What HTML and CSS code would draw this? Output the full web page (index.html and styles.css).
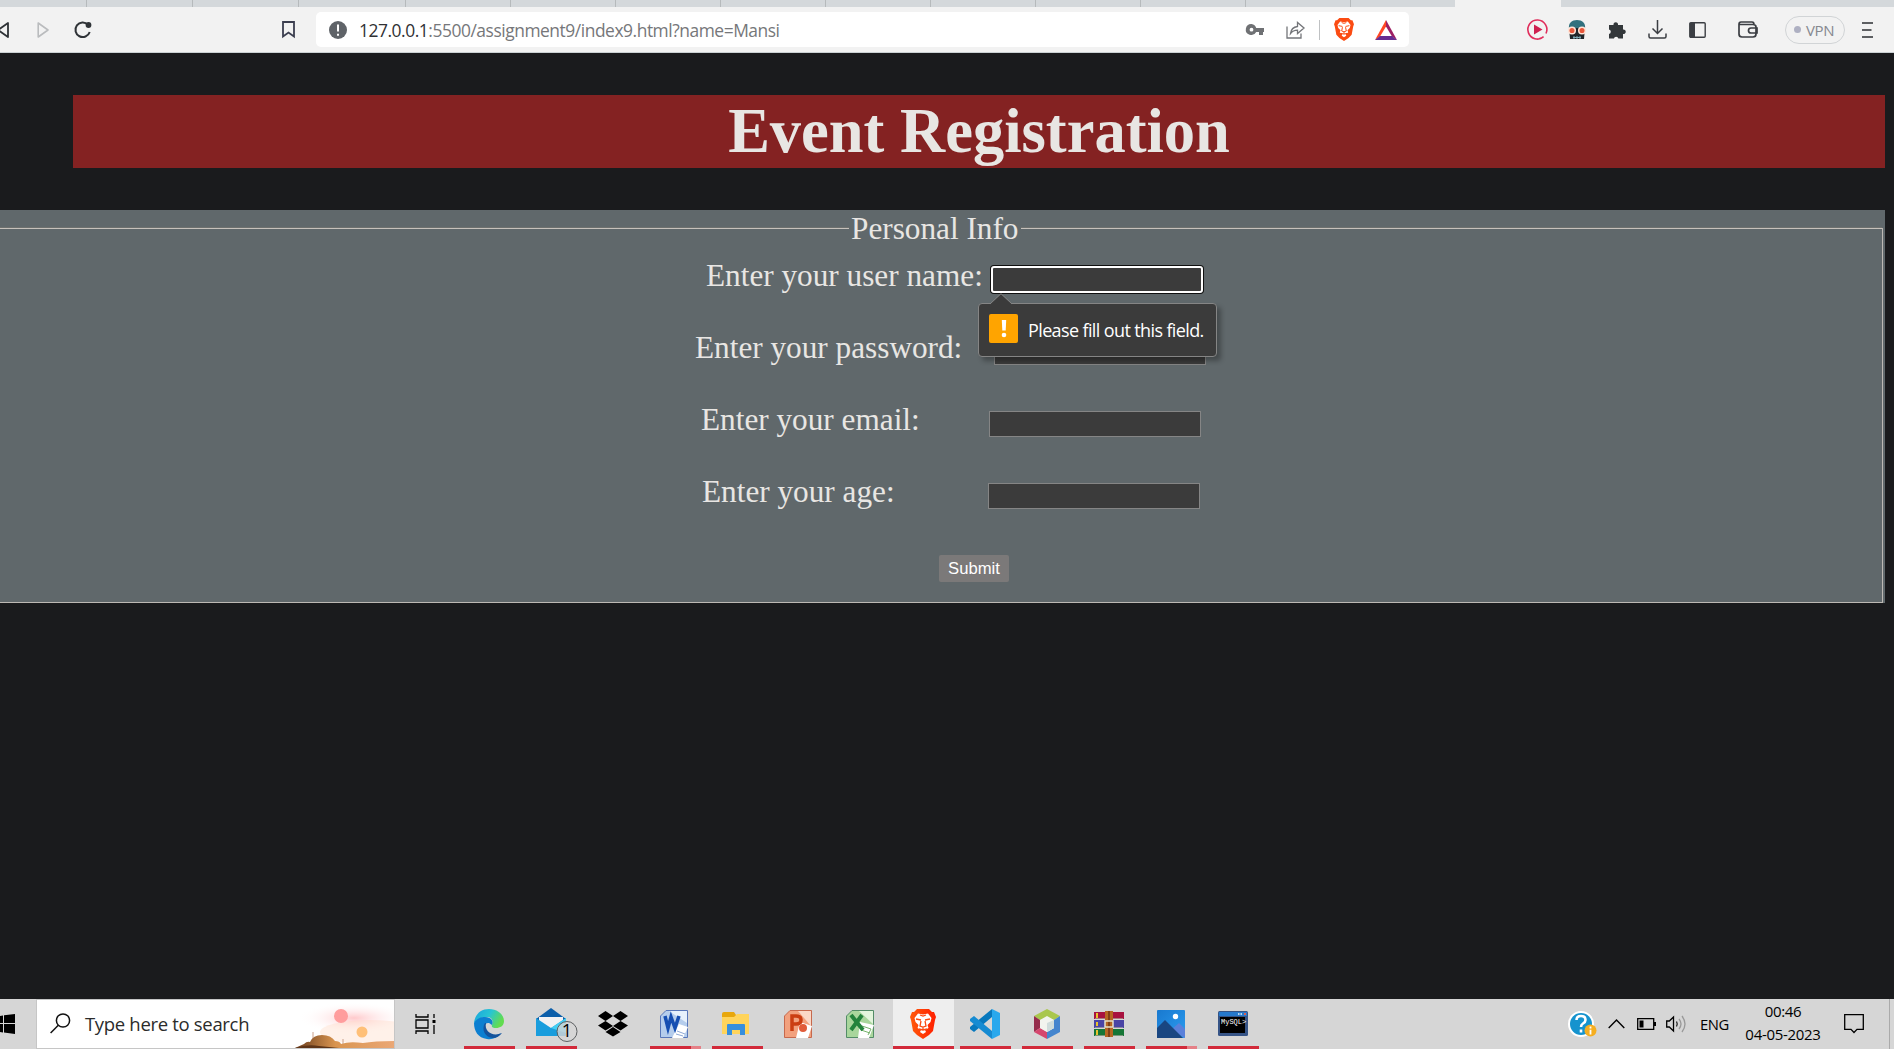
FILE: index.html
```html
<!DOCTYPE html>
<html lang="en">
<head>
<meta charset="utf-8">
<title>Event Registration</title>
<link rel="stylesheet" href="styles.css">
</head>
<body>
<svg class="defs" width="0" height="0">
  <defs>
    <linearGradient id="brave" x1="0" x2="1"><stop offset="0" stop-color="#ff5a0a"/><stop offset="1" stop-color="#ff1e00"/></linearGradient>
    <linearGradient id="edge" x1="0" y1="0" x2="1" y2="0.4"><stop offset="0" stop-color="#1aa3e0"/><stop offset="0.55" stop-color="#28c5d2"/><stop offset="1" stop-color="#62dc50"/></linearGradient>
    <linearGradient id="desert" x1="0" x2="1"><stop offset="0" stop-color="#6b3d1c"/><stop offset="0.4" stop-color="#d99550"/><stop offset="1" stop-color="#eba877"/></linearGradient>
    <radialGradient id="glow"><stop offset="0" stop-color="#ffc9cb"/><stop offset="1" stop-color="#fff" stop-opacity="0"/></radialGradient>
    <linearGradient id="photo" x2="1" y2="1"><stop offset="0" stop-color="#1979cf"/><stop offset="1" stop-color="#2b9cf0"/></linearGradient>
    <symbol id="lion" viewBox="0 0 26 30">
      <path d="M7 0h12l3 3 2 0 2 5-1 3-2 11-4 4-6 4-6-4-4-4L1 11 0 8l2-5h2z"/>
      <path fill="#fff" d="M8 4.500l5 1 5-1 3.500 4.500-1 4-3 3 1 3-3.500 2 1 2-3 2-3-2 1-2-3.500-2 1-3-3-3-1-4z"/>
      <path class="lion-face" d="M6 10l5 1M20 10l-5 1M11 12l-1 5 3 1 3-1-1-5M9 20l4 1 4-1M13 18v3M10 6l3 1 3-1"/>
    </symbol>
  </defs>
</svg>

<header class="browser">
  <div class="tabs">
    <span class="tab tab-first"></span><span class="tab tab-wide"></span><span class="tab tab-wide"></span><span class="tab tab-wide"></span><span class="tab"></span><span class="tab"></span><span class="tab"></span><span class="tab"></span><span class="tab"></span><span class="tab"></span><span class="tab"></span><span class="tab"></span><span class="tab"></span><span class="tab tab-last"></span><span class="tab tab-active"></span>
  </div>
  <div class="toolbar">
    <svg class="back" width="10" height="18" viewBox="0 0 10 18"><path d="M8 2v14L-2 9z" fill="none" stroke="#2f3337" stroke-width="1.8" stroke-linejoin="round"/></svg>
    <svg class="forward" width="13" height="18" viewBox="0 0 13 18"><path d="M1.2 2v14L11 9z" fill="none" stroke="#babcbe" stroke-width="1.6" stroke-linejoin="round"/></svg>
    <svg class="reload" width="18" height="18" viewBox="0 0 18 18"><path d="M15.7 11A7.3 7.3 0 1 1 14 3.7" fill="none" stroke="#2f3337" stroke-width="2"/><circle cx="14.5" cy="4" r="2.9" fill="#2f3337"/></svg>
    <svg class="bookmark" width="13" height="17" viewBox="0 0 13 17"><path d="M1 1h11v14.6l-5.5-4L1 15.600z" fill="none" stroke="#3b3e4f" stroke-width="1.8"/></svg>
    <div class="address">
      <svg class="info" width="18" height="18" viewBox="0 0 18 18"><circle cx="9" cy="9" r="9" fill="#5f6368"/><path d="M9 3.500v7M9 12.800v2" stroke="#fff" stroke-width="2"/></svg>
      <span class="url"><b>127.0.0.1</b>:5500/assignment9/index9.html?name=Mansi</span>
      <svg class="key" width="18" height="12" viewBox="0 0 18 12"><path d="M5.500 0a5.500 5.500 0 1 0 4.700 8H13v3h4V8h1V4h-7.800A5.500 5.500 0 0 0 5.500 0zm0 3.800a1.900 1.900 0 1 1 0 3.800 1.900 1.900 0 0 1 0-3.800z" fill="#6f7174" fill-rule="evenodd"/></svg>
      <svg class="share" width="19" height="18" viewBox="0 0 19 18"><path d="M1 5.500v11.500h14v-4.500M4.500 12.500c.5-4 3-6.500 7-7V1.500L18 7l-6.500 5.500V9.200c-3.200 0-5.200 1-7 3.300z" fill="none" stroke="#737579" stroke-width="1.300"/></svg>
      <i class="divider"></i>
      <svg class="shield" width="20" height="23" fill="#fb4b12"><use href="#lion"/></svg>
      <svg class="bat" width="22" height="20" viewBox="0 0 22 20"><path d="M11 0L0 20l5-3.500 6-10z" fill="#ff4724"/><path d="M11 0l11 20-5-3.500-6-10z" fill="#9e1f63"/><path d="M0 20h22l-5-4H5z" fill="#662d91"/></svg>
    </div>
    <svg class="play" width="21" height="21" viewBox="0 0 21 21"><path d="M19 14.500a9.500 9.500 0 1 0-2.400 3.200M15 18.700A9.500 9.500 0 0 1 12 19.800" fill="none" stroke="#e02e5c" stroke-width="1.600"/><path d="M7 5.500v10l8.500-5z" fill="#cf2050"/></svg>
    <svg class="ninja" width="20" height="19" viewBox="0 0 20 19"><path d="M2 9C1 3 5 0 10 0s9 3 8 9z" fill="#31717e"/><path d="M2 8h16l-1 11H3z" fill="#20262b"/><circle cx="5" cy="10.500" r="3.300" fill="#e8583c" stroke="#ffe5d8" stroke-width="1.500"/><circle cx="15" cy="10.500" r="3.300" fill="#e8583c" stroke="#ffe5d8" stroke-width="1.500"/><path d="M6 17.500h8M7 16v3M10 16v3M13 16v3" stroke="#7fa8b4"/></svg>
    <svg class="puzzle" width="18" height="18" viewBox="0 0 18 18"><path d="M1 4h4.500a2.300 2.300 0 1 1 4.500 0h5v4.500a2.300 2.300 0 1 1 0 4.500v4.500h-4.600a2.300 2.300 0 0 0-4.500 0H1V13a2.300 2.300 0 0 0 0-4.500z" fill="#33373a"/></svg>
    <svg class="download" width="19" height="19" viewBox="0 0 19 19"><path d="M9.500 0v13M4.500 8.500l5 5 5-5M1 13.500v3q0 1.500 1.500 1.500h14q1.500 0 1.500-1.500v-3" fill="none" stroke="#3b3e43" stroke-width="1.500"/></svg>
    <svg class="panel" width="17" height="16" viewBox="0 0 17 16"><rect x=".8" y=".8" width="15.400" height="14.400" rx="1" fill="none" stroke="#3b3e43" stroke-width="1.400"/><path d="M1 1h5v14H1z" fill="#3b3e43"/></svg>
    <svg class="wallet" width="20" height="17" viewBox="0 0 20 17"><path d="M1 3.500V13q0 3 3 3h11q3 0 3-3V6q0-2.500-3-2.500H1q0-2.500 2-2.500h11q2 0 2 2.500M19 7h-6q-2.500 0-2.500 2.500t2.500 2.500h6z" fill="none" stroke="#3b3e43" stroke-width="1.700"/></svg>
    <div class="vpn"><i></i>VPN</div>
    <svg class="menu" width="11" height="16" viewBox="0 0 11 16"><path d="M0 1h11M0 8h9.500M0 15h11" stroke="#2d2f33" stroke-width="1.700"/></svg>
  </div>
</header>

<main class="page">
  <h1 class="title">Event Registration</h1>
  <form class="form">
    <div class="legend-row"><span class="legend">Personal Info</span></div>
    <div class="fields">
      <div class="row row-name"><label>Enter your user name:</label>
        <div class="control"><input class="focused" type="text">
          <div class="bubble"><svg class="arrow" width="22" height="11" viewBox="0 0 22 11"><path d="M0 11L11 .7 22 11" fill="#3b3b3b" stroke="#858585" stroke-width="1"/></svg><span class="warn"><svg width="6" height="18" viewBox="0 0 6 18"><path d="M.8 0h4.400l-.5 10.500H1.300z" fill="#fff"/><circle cx="3" cy="15" r="2.300" fill="#fff"/></svg></span><span class="bubble-text">Please fill out this field.</span></div>
        </div>
      </div>
      <div class="row row-password"><label>Enter your password:</label><input type="password"></div>
      <div class="row row-email"><label>Enter your email:</label><input type="text"></div>
      <div class="row row-age"><label>Enter your age:</label><input type="text"></div>
      <button class="submit" type="button">Submit</button>
    </div>
  </form>
</main>

<footer class="taskbar">
  <svg class="start" width="15" height="20" viewBox="0 0 15 20"><path d="M0 2l3-.5V9H0zM4 1.300L15 0v9H4zM0 10h3v8.500L0 18zM4 10h11v10L4 18.600z" fill="#000"/></svg>
  <div class="search">
    <svg class="lens" width="21" height="21" viewBox="0 0 21 21"><circle cx="13" cy="7.500" r="6.600" fill="none" stroke="#111" stroke-width="1.500"/><path d="M8.300 12.300L.6 20" stroke="#111" stroke-width="1.500"/></svg>
    <span class="search-text">Type here to search</span>
    <svg class="art" width="100" height="48" viewBox="0 0 100 48"><ellipse cx="60" cy="18" rx="56" ry="16" fill="url(#glow)"/><ellipse cx="76" cy="32" rx="50" ry="12" fill="#ffd8c0" opacity=".35"/><circle cx="47" cy="16" r="7" fill="#ff9d9d"/><circle cx="68" cy="32" r="5.500" fill="#ffc078"/><path d="M19 44V32M49 46v-7" stroke="#caa08a"/><path d="M1 48l9-4q3-3 6-2 3-7 12-7t13 6q5 0 6 3 8-3 22-1 12-2 33-2v9z" fill="url(#desert)"/><path d="M1 48q12-4 24-2l20 2z" fill="#5e3518"/></svg>
  </div>
  <svg class="taskview" width="21" height="20" viewBox="0 0 21 20"><path d="M1 0v3h12V0M1 6h12v8H1zM1 20v-3h12v3M19 0v4M19 11v9" fill="none" stroke="#000" stroke-width="1.300"/><path d="M17.500 6h3v3h-3z"/></svg>
  <nav class="apps">
    <div class="app running"><svg width="30" height="30" viewBox="0 0 30 30"><path d="M0 14C1 5 7 0 15 0c9 0 15 6 15 12 0 5-4 7-8 7-3 0-5-1-4-3 2-5-1-8-5-8-6 0-10 3-13 6z" fill="url(#edge)"/><path d="M0 14c3-5 7-6 11-6 6 0 9 4 7 8-5-5-9 0-7 5 2 6 9 8 16 3-4 5-9 7-14 6C4 29 0 22 0 14z" fill="#0c7fd1"/><path d="M11 14c-4 6 0 15 8 15 3 0 7-2 9-5-9 4-18-1-16-10z" fill="#14539c"/></svg></div>
    <div class="app running"><svg width="42" height="34" viewBox="0 0 42 34"><path d="M0 11L15 0l15 11v7H0z" fill="#0b5eaa"/><path d="M3 9h24v12H3z" fill="#f1f1f3"/><path d="M0 10l15 10 15-10v18H0z" fill="#199ddd"/><path d="M15 20l15-10v15z" fill="#43cdf2"/><circle cx="31" cy="23.500" r="10" fill="#d6d6d6" fill-opacity=".8" stroke="#5e6163"/><text x="31" y="29" text-anchor="middle" class="badge">1</text></svg></div>
    <div class="app"><svg width="30" height="26" viewBox="0 0 30 26"><path d="M7.500 0L15 5 7.500 10 0 5zM22.500 0L30 5l-7.500 5L15 5zM7.500 10l7.500 5-7.500 4.500L0 14.500zM22.500 10l7.500 4.500-7.500 5-7.500-4.500zM7.500 21l7.500-5 7.500 5L15 25.500z"/></svg></div>
    <div class="app running multi"><svg width="28" height="28" viewBox="0 0 28 28"><path d="M6 .5h21.500v27H.5V6z" fill="#b5cdec" stroke="#5877b9"/><path d="M9 1h18v12z" fill="#e6f1fc"/><path d="M19 14l9 3-5 11H12z" fill="#fff"/><path d="M17 21l8 3M16 24l7 2" stroke="#8da8d4"/><path d="M5 6l3 12L11 7l4 11 4-12" fill="none" stroke="#154eb2" stroke-width="3.500"/></svg></div>
    <div class="app running"><svg width="28" height="24" viewBox="0 0 28 24"><path d="M0 2q0-2 2-2h10l2 3h12q1 0 1 2v17H0z" fill="#e8a70c"/><path d="M0 5h12l3-3h12v20H0z" fill="#ffd45b"/><path d="M5 23V13q0-1 1-1h16q1 0 1 1v10h-5v-5h-8v5z" fill="#378fdd"/></svg></div>
    <div class="app"><svg width="28" height="28" viewBox="0 0 28 28"><path d="M6 .5h21.500v27H.5V6z" fill="#f2a17e" stroke="#c6694d"/><path d="M14 1h13v15z" fill="#fbd8c6"/><path d="M16 12l12 4-4 12H12z" fill="#fff"/><circle cx="19" cy="18" r="4" fill="#e15c3a"/><path d="M8 21V6h4q5 0 5 4t-5 4H8" fill="none" stroke="#cb3e12" stroke-width="3.500"/></svg></div>
    <div class="app"><svg width="28" height="28" viewBox="0 0 28 28"><path d="M6 .5h21.500v27H.5V6z" fill="#a9d69c" stroke="#538c67"/><path d="M13 1h14v13z" fill="#e4f5dc"/><path d="M14 12l14 3-5 13H12z" fill="#fff"/><path d="M16 16l9 3-3 6M15 20l9 3" fill="none" stroke="#76b36a"/><path d="M5 5l12 15M16 5L5 20" stroke="#23833c" stroke-width="4"/></svg></div>
    <div class="app running current"><svg width="26" height="30" fill="url(#brave)"><use href="#lion"/></svg></div>
    <div class="app running"><svg width="30" height="30" viewBox="0 0 30 30"><path d="M22 0l8 4v22l-8 4z" fill="#29a8ed"/><path d="M22 0v8L4 23l-4-3v-2z" fill="#0878bd"/><path d="M22 30v-8L4 7 0 10v2z" fill="#168bd2"/></svg></div>
    <div class="app running"><svg width="28" height="30" viewBox="0 0 28 30"><path d="M14 0l13 7-6 4-7-3-7 3-6-4z" fill="#a9c74d"/><path d="M1 7l6 4v8l-6 4z" fill="#952c4c"/><path d="M1 23l6-4 7 4v7z" fill="#d6466e"/><path d="M27 7v16l-13 7v-7l7-4v-8z" fill="#4485ce"/><path d="M14 7l7 4v8l-7 4-7-4v-8z" fill="#f2f4ee"/><path d="M14 14l7-3v8l-7 4z" fill="#cfdcdb"/></svg></div>
    <div class="app running"><svg width="30" height="26" viewBox="0 0 30 26"><path d="M0 1h30v7H0z" fill="#a8123f"/><path d="M0 9h30v8H0z" fill="#4a45a5"/><path d="M0 18h30v7H0z" fill="#167636"/><path d="M1 7.500h28M1 16.500h28M1 24.500h28" stroke="#a9a69a" stroke-width=".7"/><path d="M3 2v5M3 11v4M3 19v5" stroke="#eac22d" stroke-width="2"/><path d="M11 0h8v26h-8z" fill="#b66622"/><path d="M15 0v26" stroke="#824016" stroke-width="2"/><rect x="11" y="10" width="8" height="6" fill="none" stroke="#e4e1c8" stroke-width="1.500"/></svg></div>
    <div class="app running multi"><svg width="28" height="28" viewBox="0 0 28 28"><rect width="28" height="28" rx="1" fill="url(#photo)"/><path d="M28 28V19l-6-6-8 7z" fill="#5a80da"/><path d="M0 18l8-8 18 18H0z" fill="#194681"/><circle cx="18.500" cy="6.500" r="2.700" fill="#fff"/></svg></div>
    <div class="app running"><svg width="30" height="25" viewBox="0 0 30 25"><rect width="30" height="25" rx="1.500" fill="#365486"/><path d="M1 1h28v4H1z" fill="#2679cc"/><path d="M2 6h25v16H2z"/><path d="M20 3h5" stroke="#b9d8ee" stroke-dasharray="1.500 1" stroke-width="2"/><path d="M26 2h2v2h-2z" fill="#dc5d51"/><text x="3" y="13" class="mysql">MySQL&gt;</text></svg></div>
  </nav>
  <div class="tray">
    <svg class="help" width="29" height="27" viewBox="0 0 29 27"><circle cx="13" cy="13" r="12" fill="#1593ce" stroke="#fff" stroke-width="2"/><path d="M8.500 9q0-4 4.500-4t4.500 4q0 2-2.500 3.500-2 1.200-2 3.500M13 18.500v3" fill="none" stroke="#fff" stroke-width="2.600"/><circle cx="22.500" cy="19.500" r="6" fill="#f5ae20"/><path d="M22.500 15.500v2M22.500 18.800v4.700" stroke="#fff" stroke-width="1.800"/></svg>
    <svg class="chevron" width="17" height="10" viewBox="0 0 17 10"><path d="M.7 9l7.800-8 7.800 8" fill="none" stroke="#000" stroke-width="1.400"/></svg>
    <svg class="battery" width="19" height="12" viewBox="0 0 19 12"><path d="M.7.700h16v10.600H.7z" fill="none" stroke="#000" stroke-width="1.300"/><path d="M2.500 2.500h4v7h-4zM17 4h2v4h-2z"/></svg>
    <svg class="volume" width="21" height="18" viewBox="0 0 21 18"><path d="M.7 6h2.600L7.500 2v14l-4.200-4H.7z" fill="none" stroke="#000" stroke-width="1.300"/><path d="M10.500 6.500q1.500 2.500 0 5" fill="none" stroke="#222" stroke-width="1.300"/><path d="M13 4q4 5 0 10M16 1q6 8 0 16" fill="none" stroke="#999" stroke-width="1.300"/></svg>
    <span class="lang">ENG</span>
    <div class="clock"><span class="time">00:46</span><span class="date">04-05-2023</span></div>
    <svg class="notify" width="20" height="20" viewBox="0 0 20 20"><path d="M.7.700h18.600v14.600H13L10 18.500 7 15.300H.7z" fill="none" stroke="#000" stroke-width="1.300"/></svg>
    <i class="peek"></i>
  </div>
</footer>
</body>
</html>
```

FILE: styles.css
```css
* { box-sizing: border-box; }
body {
  margin: 0;
  width: 1894px;
  height: 1049px;
  overflow: hidden;
  display: flex;
  flex-direction: column;
  background: #1a1b1d;
  font-family: "Open Sans", sans-serif;
}
svg { display: block; flex: none; overflow: visible; }
.defs { position: absolute; }
.lion-face { fill: none; stroke: #fb4b12; stroke-width: 1.3; }

/* Browser chrome */
.browser { height: 53px; background: #f2f2f2; border-bottom: 1px solid #cbd1d3; flex: none; }
.tabs { display: flex; height: 7px; background: #d4d8db; }
.tab { flex: none; width: 105px; border-right: 1px solid #b6babc; }
.tab-first { width: 87px; }
.tab-wide { width: 106.2px; }
.tab-last { width: 104px; border: 0; }
.tab-active { width: 106px; background: #f2f2f2; border: 0; }
.toolbar { display: flex; align-items: center; height: 45px; }
.forward { margin-left: 27px; }
.reload { margin-left: 24px; }
.bookmark { margin-left: 190px; }
.address {
  display: flex;
  align-items: center;
  width: 1093px;
  height: 35px;
  margin-left: 21px;
  padding-left: 13px;
  background: #fff;
  border-radius: 5px;
}
.url { width: 870px; margin-left: 12px; font-size: 17.4px; color: #76777a; letter-spacing: -0.45px; white-space: nowrap; }
.url b { font-weight: 400; color: #303134; }
.key { margin-left: 17px; }
.share { margin-left: 22px; }
.divider { width: 1px; height: 20px; margin-left: 14px; background: #bfc1c3; }
.shield { margin-left: 14px; }
.bat { margin-left: 21px; }
.play { margin-left: 118px; }
.ninja { margin-left: 19px; }
.puzzle { margin-left: 21px; }
.download { margin-left: 22px; }
.panel { margin-left: 22px; }
.wallet { margin-left: 32px; }
.vpn {
  display: flex;
  align-items: center;
  width: 60px;
  height: 28px;
  margin-left: 27px;
  padding-left: 8px;
  border: 1px solid #d1d4d6;
  border-radius: 14px;
  font-size: 15px;
  color: #85888f;
  letter-spacing: -0.4px;
}
.vpn i { width: 7px; height: 7px; margin-right: 5px; border-radius: 50%; background: #aeb0c2; }
.menu { margin-left: 17px; }

/* Page */
.page { flex: 1; padding: 42px 9px 0 0; font-family: "Liberation Serif", serif; color: #e8e6e3; }
.title {
  height: 73px;
  margin: 0 0 42px 73px;
  background: #842222;
  font-size: 62.5px;
  line-height: 73px;
  text-align: center;
}
.form { height: 393px; padding-right: 2px; background: #60686b; font-size: 31.25px; line-height: 37px; }
.legend-row { display: flex; align-items: center; height: 36px; margin-right: 1px; }
.legend-row::before, .legend-row::after { content: ""; height: 2px; background: linear-gradient(#6e716f 50%, #c6c1bb 50%); }
.legend-row::before { width: 849px; }
.legend-row::after { flex: 1; }
.legend { width: 172px; padding: 1px 2px 0; white-space: nowrap; }
.fields {
  height: 375px;
  margin-top: -18px;
  padding-top: 29px;
  border-right: 1px solid #bdb9b4;
  border-bottom: 1px solid #bdb9b4;
}
.row { display: flex; height: 72px; }
.row label { white-space: nowrap; }
.row-name { padding-left: 706px; }
.row-name label { width: 285px; }
.row-password { padding-left: 695px; }
.row-password label { width: 299px; }
.row-email { padding-left: 701px; }
.row-email label { width: 288px; }
.row-age { padding-left: 702px; }
.row-age label { width: 286px; }
input { width: 212px; height: 26px; margin: 10px 0 0; padding: 0; background: #3b3b3b; border: 1px solid #858585; border-radius: 0; outline: 0; }
.control { position: relative; }
.focused { display: block; width: 212px; height: 27px; margin-top: 9px; border: 2px solid #fff; border-radius: 3px; box-shadow: 0 0 0 1px #101010; }
.bubble {
  position: absolute;
  z-index: 1;
  left: -13px;
  top: 46px;
  display: flex;
  align-items: center;
  width: 239px;
  height: 54px;
  padding-left: 10px;
  background: #3b3b3b;
  border: 1px solid #858585;
  border-radius: 4px;
  box-shadow: 4px 4px 5px rgba(0, 0, 0, 0.3);
  font: 18px "Open Sans", sans-serif;
  letter-spacing: -0.62px;
  color: #fff;
}
.arrow { position: absolute; left: 11px; top: -11px; }
.warn { display: flex; align-items: center; justify-content: center; width: 29px; height: 29px; margin: 0 10px 3px 0; border-radius: 2px; background: #ffa400; }
.bubble-text { white-space: nowrap; }
.submit {
  display: block;
  width: 70px;
  height: 27px;
  margin: 10px 0 0 939px;
  padding: 0;
  background: #7b7979;
  border: 0;
  border-radius: 2px;
  font: 16.67px "Liberation Sans", sans-serif;
  color: #fff;
}

/* Taskbar */
.taskbar { display: flex; align-items: center; flex: none; height: 50px; background: #d6d6d6; }
.search { display: flex; align-items: center; width: 359px; height: 50px; margin-left: 21px; padding-left: 13px; background: #fff; border: 1px solid #c6c6c6; }
.search-text { width: 210px; margin-left: 14px; padding-bottom: 2px; font-size: 18.5px; letter-spacing: -0.32px; color: #2b2b2b; white-space: nowrap; }
.lens { margin-bottom: 2px; }
.art { margin-left: -1px; overflow: hidden; }
.taskview { margin-left: 20px; }
.apps { display: flex; height: 50px; margin-left: 22px; }
.app { display: flex; flex-direction: column; justify-content: center; align-items: center; width: 62px; padding-bottom: 1px; position: relative; }
.app:nth-child(n+4):nth-child(-n+7) { padding-right: 2px; }
.running::after { content: ""; position: absolute; bottom: 0; left: 6px; width: 51px; height: 3px; background: #d22a3a; }
.multi::after { background: linear-gradient(90deg, #d22a3a 41px, #e58087 41px); }
.current { background: #eee; margin-left: 1px; width: 61px; padding-right: 1px; }
.current::after { left: 0; width: 61px; }
.app:nth-child(2) svg { margin: 2px 0 0 11px; }
.badge { font: 18px "Open Sans", sans-serif; }
.mysql { font: 7px "Liberation Mono", monospace; fill: #fff; }
.tray { display: flex; align-items: center; height: 50px; margin-left: auto; }
.chevron { margin-left: 11px; }
.battery { margin-left: 12px; }
.volume { margin-left: 10px; }
.lang { width: 30px; margin-left: 13px; font-size: 14.8px; letter-spacing: -0.4px; }
.clock { display: flex; flex-direction: column; align-items: center; width: 78px; margin-left: 14px; font-size: 15px; line-height: 23px; letter-spacing: -0.3px; white-space: nowrap; padding-bottom: 2px; }
.notify { margin-left: 22px; }
.peek { width: 1px; height: 50px; margin: 0 4px 0 25px; background: #aaa; }
```
